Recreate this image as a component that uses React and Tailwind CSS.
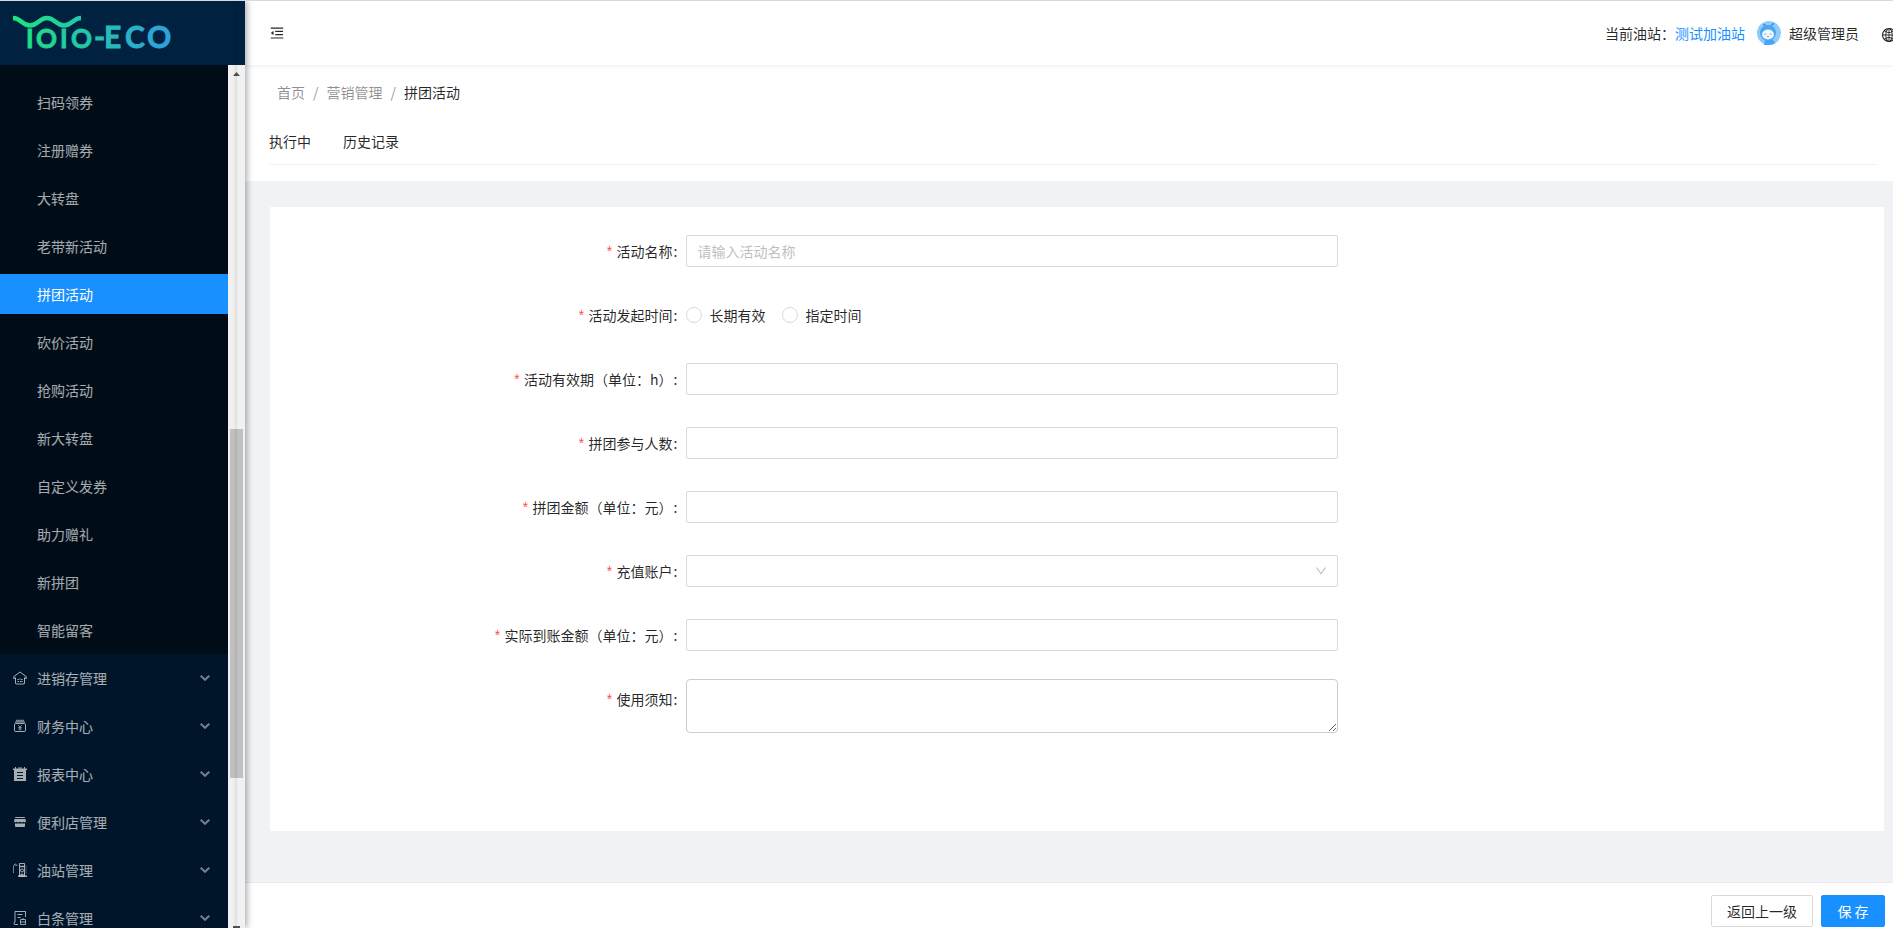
import { AiOutlineMenuFold, AiOutlineGlobal } from 'react-icons/ai';

const subItems = [
  '扫码领券', '注册赠券', '大转盘', '老带新活动', '拼团活动', '砍价活动',
  '抢购活动', '新大转盘', '自定义发券', '助力赠礼', '新拼团', '智能留客',
];
const activeItem = '拼团活动';

const groups = [
  { name: '进销存管理', Icon: HouseIcon },
  { name: '财务中心', Icon: WalletIcon },
  { name: '报表中心', Icon: ReportIcon },
  { name: '便利店管理', Icon: ShopIcon },
  { name: '油站管理', Icon: PumpIcon },
  { name: '白条管理', Icon: BillIcon },
];

const tabs = ['执行中', '历史记录'];

function HouseIcon() {
  return (
    <svg viewBox="0 0 14 14" className="w-3.5 h-3.5" fill="none" stroke="currentColor">
      <path d="M2.5 6.5v5.5q0 1 1 1h7q1 0 1-1V6.5" />
      <path d="M.6 7.4.8 5.6 7 1l6.200 4.600.2 1.800-1.900-.4" strokeLinejoin="round" />
      <path d="M.6 7.400l1.900-.4" />
      <path d="M4.500 8.500h1.500M8 8.500h1.500M4.500 10.500h1.500M7 10.500h2.500M7 7.500v1" strokeWidth="1.200" />
    </svg>
  );
}

function WalletIcon() {
  return (
    <svg viewBox="0 0 14 14" className="w-3.5 h-3.5" fill="none" stroke="currentColor">
      <path d="M3 1.500h8M2 3h10" strokeWidth="1.500" opacity=".7" />
      <rect x="1.500" y="4.500" width="11" height="8" rx="1" />
      <path d="M5.200 6 7 8l1.800-2M7 8v3.500M5.300 8.500h3.400M5.300 10h3.400" strokeWidth=".7" />
    </svg>
  );
}

function ReportIcon() {
  return (
    <svg viewBox="0 0 14 14" className="w-3.5 h-3.5">
      <path d="M0 1.500h2V0h1v1.500h2.500V0h1v1.500h1V0h1v1.500H11V0h1v1.500h2V3h-1v11H1V3H0z" fill="currentColor" />
      <path d="M4 5.500h6M4 8.500h6M4 11.500h6" stroke="#001529" />
    </svg>
  );
}

function ShopIcon() {
  return (
    <svg viewBox="0 0 14 14" className="w-3.5 h-3.5" fill="currentColor">
      <path d="M3 2h8q1 0 1.200 1H1.800Q2 2 3 2zM1.500 4h11l.5 2.500-1 1-1.500-.7-1.700.7L7 6.800l-1.700.7-1.800-.7-1.500.7-1-1zM2 8.500h10V11q0 1-1 1H3q-1 0-1-1z" />
    </svg>
  );
}

function PumpIcon() {
  return (
    <svg viewBox="0 0 14 14" className="w-3.5 h-3.5" fill="none" stroke="currentColor">
      <path d="M.5 10V2.500" opacity=".7" />
      <path d="M.8 2.200 2.500.800M2 2.200h2.500" />
      <path d="M6.500.500h5v12.500h-5z" />
      <path d="M5 13.200h9" strokeWidth="1.500" />
      <path d="M7 3.500h4M7.500 11.500h3" strokeWidth="1.500" />
      <circle cx="9" cy="7.500" r="1.500" />
      <path d="M13 2v9" opacity=".4" />
    </svg>
  );
}

function BillIcon() {
  return (
    <svg viewBox="0 0 14 14" className="w-3.5 h-3.5" fill="none" stroke="currentColor">
      <path d="M12.500 6V.5H2v10.500q-1.500.5-1 2 .5.800 1.500.5H5" />
      <path d="M4.500 3.500h5M4.500 6.500h3" />
      <path d="M7.500 8.500h5v5h-5zM7.500 11h5M10 7v1.500" strokeWidth=".9" />
    </svg>
  );
}

function Chevron() {
  return (
    <svg viewBox="0 0 10 6" className="w-2.5 h-1.5 mr-0.5" fill="none" stroke="currentColor" strokeWidth="2" opacity=".7">
      <path d="M.7.800 5 4.800 9.300.800" />
    </svg>
  );
}

function Logo() {
  return (
    <svg viewBox="0 0 245 64" className="w-full h-16 shrink-0 bg-[#002140]" role="img" aria-label="TOTO-ECO">
      <defs>
        <linearGradient id="logo" gradientUnits="userSpaceOnUse" x1="13" y1="0" x2="171" y2="0">
          <stop offset="0" stopColor="#1be67a" />
          <stop offset=".5" stopColor="#24c3b0" />
          <stop offset="1" stopColor="#2f9fe0" />
        </linearGradient>
      </defs>
      <path d="M13 17c8 0 9 7.500 17 7.500S39 17 47 17s9 7.500 17 7.500S73 17 81 17" fill="none" stroke="url(#logo)" strokeWidth="4.500" />
      <g fill="url(#logo)" stroke="url(#logo)" strokeWidth=".8" fontFamily="Lato, sans-serif" fontWeight="700">
        <text x="26 36 60 71" y="47" fontSize="26">IOIO</text>
        <text x="94 104 125 147" y="47" fontSize="30">-ECO</text>
      </g>
    </svg>
  );
}

function Avatar() {
  return (
    <svg viewBox="0 0 24 24" className="w-6 h-6">
      <circle cx="12" cy="12" r="12" fill="#8fcbfb" />
      <path d="M6 3.500q2 0 3 2M17 2.500q-2 .5-3 2.500" stroke="#3d8fe0" strokeWidth="1.500" fill="none" />
      <circle cx="11" cy="12" r="8" fill="#4aa5f2" />
      <path d="M7 24q0-6 5-6t6 4q-3 2-6 2z" fill="#4aa5f2" />
      <ellipse cx="11" cy="13.500" rx="6" ry="5" fill="#eef7ff" />
      <path d="M7.500 13.500q1-1 2 0M12.500 13.500q1-1 2 0M10 15.500h2" stroke="#6b8fc0" strokeWidth=".8" fill="none" />
    </svg>
  );
}

function Sidebar() {
  return (
    <aside className="relative z-20 w-[245px] shrink-0 flex flex-col overflow-hidden">
      <Logo />
      <div className="flex-1 min-h-0 flex">
        <nav className="flex-1 overflow-hidden bg-[#001529] text-white/65">
          <ul className="bg-[#000c17] pt-[17px] pb-1 space-y-2">
            {subItems.map(name => (
              <li key={name}>
                <a
                  href="#"
                  className={name === activeItem ? 'block h-10 leading-10 pl-[37px] bg-[#1890ff] text-white' : 'block h-10 leading-10 pl-[37px]'}
                >
                  {name}
                </a>
              </li>
            ))}
          </ul>
          <ul className="pt-1 space-y-2">
            {groups.map(({ name, Icon }) => (
              <li key={name}>
                <button type="button" className="w-full h-10 flex items-center pl-[13px] pr-4">
                  <Icon />
                  <span className="flex-1 text-left pl-2.5">{name}</span>
                  <Chevron />
                </button>
              </li>
            ))}
          </ul>
        </nav>
        <div className="w-[17px] bg-[#f1f1f1] flex flex-col items-center">
          <svg viewBox="0 0 17 17" className="w-[17px] h-[17px] shrink-0">
            <path d="M5 11h7L8.500 7z" fill="#505050" />
          </svg>
          <div className="grow-[347]" />
          <div className="grow-[349] w-[13px] bg-[#c1c1c1]" />
          <div className="grow-[148]" />
          <div className="w-[7px] h-0.5 bg-[#505050]" />
        </div>
      </div>
    </aside>
  );
}

function Header() {
  return (
    <header className="relative z-10 h-16 shrink-0 flex items-center pl-6 bg-white shadow-[0_1px_4px_rgba(0,21,41,0.08)] overflow-hidden">
      <button type="button" aria-label="menu">
        <AiOutlineMenuFold className="w-4 h-4" />
      </button>
      <div className="ml-auto flex items-center">
        <span>当前油站：</span>
        <a href="#" className="text-[#1890ff] mr-3">测试加油站</a>
        <Avatar />
        <span className="ml-2 mr-[22px]">超级管理员</span>
        <button type="button" aria-label="language" className="w-3 overflow-hidden pt-1">
          <AiOutlineGlobal className="w-4 h-4 max-w-none" />
        </button>
      </div>
    </header>
  );
}

function PageHead() {
  return (
    <div className="bg-white py-4 pl-6 pr-4">
      <nav className="flex gap-2 pl-2 text-black/45">
        <a href="#">首页</a>
        <span>/</span>
        <a href="#">营销管理</a>
        <span>/</span>
        <span className="text-black/85">拼团活动</span>
      </nav>
      <div className="mt-4 flex gap-8 border-b border-[#f0f0f0]">
        {tabs.map(tab => (
          <button type="button" key={tab} className="pt-[11px] pb-3">{tab}</button>
        ))}
      </div>
    </div>
  );
}

const control = 'block w-full h-8 my-1 px-[11px] border border-[#d9d9d9] rounded-xs bg-white placeholder:text-[#bfbfbf]';

function Field({ label, id, children }) {
  const Label = id ? 'label' : 'span';
  return (
    <div className="flex mb-6">
      <Label htmlFor={id} className="w-1/4 h-10 flex justify-end leading-10 pr-2">
        <span className="mr-[3px] text-[#ff4d4f] font-['Liberation_Mono',monospace] leading-11">*</span>
        {label}
        <span className="ml-px">:</span>
      </Label>
      <div className="w-5/12">{children}</div>
    </div>
  );
}

function RadioOption({ text }) {
  return (
    <label className="flex items-center gap-2 mr-4">
      <input
        type="radio"
        name="startTime"
        className="appearance-none w-4 h-4 border border-[#d9d9d9] rounded-full checked:border-[5px] checked:border-[#1890ff]"
      />
      {text}
    </label>
  );
}

function ActivityForm() {
  return (
    <form className="flex-1 bg-white p-6">
      <Field label="活动名称" id="name">
        <input id="name" type="text" placeholder="请输入活动名称" className={control} />
      </Field>
      <Field label="活动发起时间">
        <div role="radiogroup" aria-label="活动发起时间" className="h-10 flex items-center">
          <RadioOption text="长期有效" />
          <RadioOption text="指定时间" />
        </div>
      </Field>
      <Field label="活动有效期（单位：h）" id="hours">
        <input id="hours" type="text" className={control} />
      </Field>
      <Field label="拼团参与人数" id="people">
        <input id="people" type="text" className={control} />
      </Field>
      <Field label="拼团金额（单位：元）" id="amount">
        <input id="amount" type="text" className={control} />
      </Field>
      <Field label="充值账户" id="account">
        <div className="relative">
          <select id="account" className={`${control} appearance-none`}>
            <option value=""></option>
          </select>
          <svg viewBox="0 0 10 8" className="absolute right-3 top-3 w-2.5 h-2 pointer-events-none" fill="none" stroke="#bfbfbf" strokeWidth="1.200">
            <path d="M.5.500 5 6.800 9.500.500" />
          </svg>
        </div>
      </Field>
      <Field label="实际到账金额（单位：元）" id="received">
        <input id="received" type="text" className={control} />
      </Field>
      <Field label="使用须知" id="notice">
        <textarea id="notice" className="block w-full h-[54px] px-[11px] py-1 border border-[#ccc] rounded bg-white resize" />
      </Field>
    </form>
  );
}

export default function App() {
  return (
    <div className="h-screen flex overflow-hidden border-t border-[#d9d9d9] bg-[#f0f2f5] text-sm leading-[22px] text-black/85 font-['Noto_Sans_CJK_SC',sans-serif]">
      <Sidebar />
      <div className="relative flex-1 min-w-0 flex flex-col">
        {/* shadow cast by the sidebar */}
        <div className="absolute z-20 inset-y-0 right-full w-2 shadow-[2px_0_6px_rgba(0,21,41,0.35)]" />
        <Header />
        <PageHead />
        <main className="flex-1 flex flex-col pt-[26px] pb-[51px] pl-[25px] pr-[9px]">
          <ActivityForm />
        </main>
        <footer className="shrink-0 flex justify-end gap-2 pt-3 pb-px pr-2 bg-white border-t border-[#e8e8e8]">
          <button type="button" className="h-8 px-[15px] border border-[#d9d9d9] rounded-xs bg-white">返回上一级</button>
          <button type="button" className="h-8 min-w-16 border border-[#1890ff] rounded-xs bg-[#1890ff] text-white">保 存</button>
        </footer>
      </div>
    </div>
  );
}
